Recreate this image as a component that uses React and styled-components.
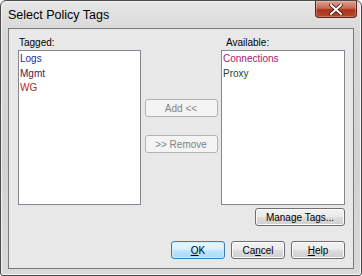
import styled, { createGlobalStyle } from 'styled-components';

const Global = createGlobalStyle`
  html, body {
    margin: 0;
    padding: 0;
    background: #ffffff;
  }
  body {
    font-family: "Liberation Sans", Arial, sans-serif;
    font-size: 10px;
    color: #000;
  }
`;

const Window = styled.div`
  width: 362px;
  height: 276px;
  box-sizing: border-box;
  border: 1px solid #4a4a4a;
  border-radius: 6px 6px 3px 3px;
  background: linear-gradient(180deg, #e6e6e6 0%, #d8d8d8 12%, #d2d2d2 60%, #dadada 100%);
  box-shadow: inset 0 0 0 1px #f4f4f4;
  display: flex;
  flex-direction: column;
  padding: 0 7px 6px 7px;
`;

const TitleBar = styled.div`
  height: 27px;
  display: flex;
  justify-content: space-between;
  align-items: flex-start;
`;

const Title = styled.span`
  font-family: "Liberation Sans", Arial, sans-serif;
  font-size: 12.5px;
  color: #000;
  margin-top: 7px;
`;

const CloseButton = styled.div`
  width: 42px;
  height: 17px;
  margin-right: -3px;
  box-sizing: border-box;
  border: 1px solid #5a2219;
  border-top: none;
  border-radius: 0 0 4px 4px;
  background: linear-gradient(180deg, #d9a190 0%, #c76a52 45%, #a8321c 55%, #b9482c 100%);
  display: flex;
  align-items: center;
  justify-content: center;
  box-shadow: inset 0 0 0 1px rgba(255, 255, 255, 0.25);
`;

const Client = styled.div`
  flex: 1;
  box-sizing: border-box;
  border: 1px solid #7a7a7a;
  background: #e8e8e8;
  padding: 8px 8px 9px 9px;
  display: flex;
  flex-direction: column;
`;

const Columns = styled.div`
  display: flex;
  align-items: flex-start;
`;

const Column = styled.div`
  display: flex;
  flex-direction: column;
  width: ${(p) => p.width}px;
`;

const Label = styled.div`
  height: 13px;
  line-height: 12px;
  padding-left: ${(p) => p.indent || 1}px;
`;

const ListBox = styled.div`
  height: 155px;
  box-sizing: border-box;
  border: 1px solid #828790;
  background: #ffffff;
  padding: 1px 1px;
  display: flex;
  flex-direction: column;
`;

const Item = styled.div`
  height: 14.5px;
  line-height: 14px;
  color: ${(p) => p.color};
`;

const Middle = styled.div`
  flex: 1;
  display: flex;
  flex-direction: column;
  align-items: center;
  gap: 18px;
  padding-top: 62px;
`;

const Button = styled.button`
  font-family: "Liberation Sans", Arial, sans-serif;
  font-size: 10px;
  width: ${(p) => p.width}px;
  height: 18px;
  padding: 0;
  box-sizing: border-box;
  border-radius: 3px;
  border: 1px solid #707070;
  color: #000;
  background: linear-gradient(180deg, #f2f2f2 0%, #ebebeb 48%, #dddddd 52%, #cfcfcf 100%);
  box-shadow: inset 0 0 0 1px #fcfcfc;
  &:disabled {
    border-color: #adb2b5;
    background: #f4f4f4;
    color: #838383;
    box-shadow: none;
  }
  ${(p) =>
    p.primary &&
    `
    border-color: #3c7fb1;
    background: linear-gradient(180deg, #eaf6fd 0%, #d9f0fc 48%, #bee6fd 52%, #a7d9f5 100%);
    box-shadow: inset 0 0 0 1px #d0eaf8;
  `}
  u {
    text-decoration: underline;
  }
`;

const ManageRow = styled.div`
  display: flex;
  justify-content: flex-end;
  margin-top: 3px;
`;

const ButtonRow = styled.div`
  display: flex;
  justify-content: flex-end;
  gap: 6px;
  margin-top: 15px;
`;

function CloseGlyph() {
  return (
    <svg width="14" height="11" viewBox="0 0 14 11">
      <path
        d="M2 1 L12 10 M12 1 L2 10"
        stroke="#3a1208"
        strokeWidth="3.6"
        strokeLinecap="round"
      />
      <path
        d="M2 1 L12 10 M12 1 L2 10"
        stroke="#ffffff"
        strokeWidth="2"
        strokeLinecap="round"
      />
    </svg>
  );
}

const tagged = [
  { name: 'Logs', color: '#1f2c96' },
  { name: 'Mgmt', color: '#4a1856' },
  { name: 'WG', color: '#b22a22' },
];

const available = [
  { name: 'Connections', color: '#a3206a' },
  { name: 'Proxy', color: '#234a1e' },
];

export default function App() {
  return (
    <>
      <Global />
      <Window>
        <TitleBar>
          <Title>Select Policy Tags</Title>
          <CloseButton>
            <CloseGlyph />
          </CloseButton>
        </TitleBar>
        <Client>
          <Columns>
            <Column width={123}>
              <Label>Tagged:</Label>
              <ListBox>
                {tagged.map((t) => (
                  <Item key={t.name} color={t.color}>{t.name}</Item>
                ))}
              </ListBox>
            </Column>
            <Middle>
              <Button width={73} disabled>Add &lt;&lt;</Button>
              <Button width={73} disabled>&gt;&gt; Remove</Button>
            </Middle>
            <Column width={124}>
              <Label indent={5}>Available:</Label>
              <ListBox>
                {available.map((t) => (
                  <Item key={t.name} color={t.color}>{t.name}</Item>
                ))}
              </ListBox>
            </Column>
          </Columns>
          <ManageRow>
            <Button width={90}>Manage Tags...</Button>
          </ManageRow>
          <ButtonRow>
            <Button width={54} primary><u>O</u>K</Button>
            <Button width={54}>Ca<u>n</u>cel</Button>
            <Button width={54}><u>H</u>elp</Button>
          </ButtonRow>
        </Client>
      </Window>
    </>
  );
}
